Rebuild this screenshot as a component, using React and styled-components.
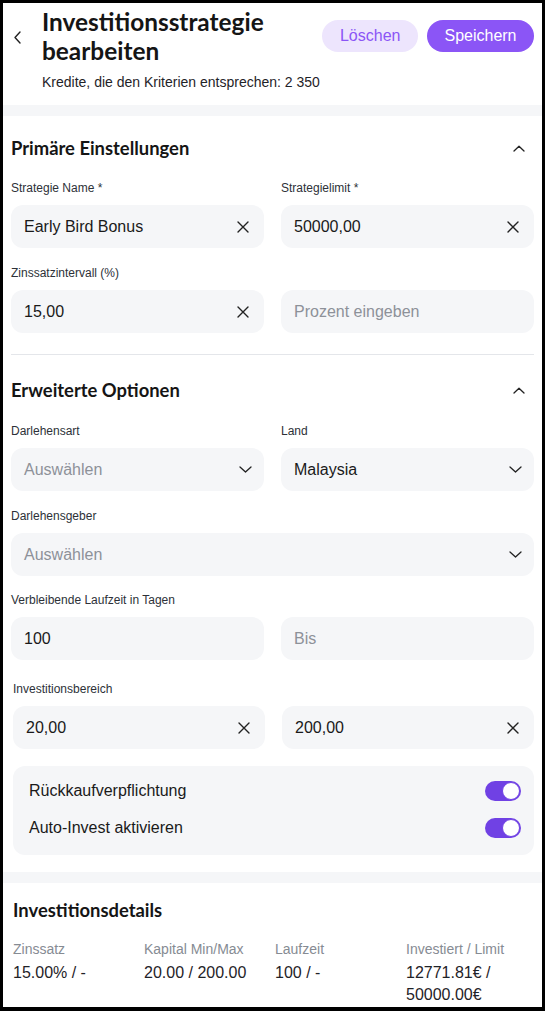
import React, { useState } from "react";
import styled, { createGlobalStyle } from "styled-components";

const GlobalStyle = createGlobalStyle`
  html, body {
    margin: 0;
    padding: 0;
    background: #ffffff;
  }
  body {
    font-family: "Liberation Sans", Arial, sans-serif;
    color: #1f2328;
  }
  * {
    box-sizing: border-box;
  }
`;

const Frame = styled.div`
  width: 545px;
  height: 1011px;
  border: 3px solid #000;
  border-bottom-width: 4px;
  overflow: hidden;
  background: #ffffff;
`;

const Header = styled.header`
  height: 102px;
  padding: 4px 8px 0 0;
`;

const HeaderRow = styled.div`
  display: flex;
  align-items: flex-start;
`;

const BackButton = styled.button`
  width: 39px;
  height: 60px;
  border: none;
  background: none;
  padding: 0 0 0 11px;
  display: flex;
  align-items: center;
  color: #222;
  cursor: pointer;
`;

const Title = styled.h1`
  flex: 1;
  margin: 0;
  font-family: Lato, "Noto Sans", sans-serif;
  font-weight: 700;
  font-size: 24.4px;
  line-height: 29px;
  color: #151515;
`;

const Actions = styled.div`
  display: flex;
  gap: 9px;
  margin-top: 13px;
`;

const PillButton = styled.button`
  height: 32px;
  padding: 0 17.5px;
  border: none;
  border-radius: 16px;
  font-family: "Liberation Sans", Arial, sans-serif;
  font-size: 16px;
  cursor: pointer;
  background: ${(p) => (p.$primary ? "#8b55f6" : "#ede5fd")};
  color: ${(p) => (p.$primary ? "#ffffff" : "#8b55f6")};
`;

const Subtitle = styled.div`
  margin: 7px 0 0 39px;
  font-size: 14px;
  line-height: 16px;
  color: #1f2328;
`;

const Band = styled.div`
  height: 11px;
  margin-top: ${(p) => p.$top || 0}px;
  background: #f5f6f8;
`;

const Card = styled.section`
  padding: 0 8px;
`;

const SectionHeader = styled.div`
  display: flex;
  align-items: center;
  justify-content: space-between;
  height: 24px;
  margin-top: ${(p) => p.$top || 20}px;
  padding-right: 9px;
`;

const SectionTitle = styled.h2`
  margin: 0;
  font-family: Lato, "Noto Sans", sans-serif;
  font-weight: 700;
  font-size: 18.4px;
  line-height: 24px;
  color: #151515;
`;

const Grid = styled.div`
  display: grid;
  grid-template-columns: ${(p) => (p.$single ? "1fr" : "1fr 1fr")};
  column-gap: 17px;
  margin-top: ${(p) => p.$top || 17}px;
  padding-left: ${(p) => p.$shift || 0}px;
`;

const Label = styled.label`
  display: block;
  grid-column: 1 / -1;
  font-size: 12px;
  line-height: 16px;
  color: #2d3138;
  margin-bottom: 9px;
`;

const Field = styled.div`
  height: 43px;
  border-radius: 12px;
  background: #f5f6f8;
  display: flex;
  align-items: center;
  justify-content: space-between;
  padding: 0 ${(p) => (p.$select ? 12 : 15)}px 0 13px;
  font-size: 16px;
  color: ${(p) => (p.$placeholder ? "#8d9199" : "#1a1a1a")};
`;

const Divider = styled.hr`
  margin: 21px 0 0;
  border: none;
  border-top: 1px solid #e4e6ea;
`;

const ToggleBox = styled.div`
  margin: 17px 0 0 2px;
  padding: 15px 13px 17px 16px;
  border-radius: 12px;
  background: #f5f6f8;
  display: flex;
  flex-direction: column;
  gap: 17px;
`;

const ToggleRow = styled.div`
  display: flex;
  align-items: center;
  justify-content: space-between;
  height: 20px;
  font-size: 16px;
  color: #1a1a1a;
`;

const Switch = styled.button`
  position: relative;
  width: 36px;
  height: 20px;
  border: none;
  border-radius: 10px;
  background: ${(p) => (p.$on ? "#7041e4" : "#d1d5db")};
  padding: 0;
  cursor: pointer;

  &::after {
    content: "";
    position: absolute;
    top: 1px;
    left: ${(p) => (p.$on ? "17px" : "1px")};
    width: 18px;
    height: 18px;
    border-radius: 50%;
    background: #fff;
    box-sizing: border-box;
    border: 1.5px solid #7041e4;
  }
`;

const DetailsCard = styled.section`
  padding: 15px 10px 0;
`;

const DetailsGrid = styled.div`
  display: grid;
  grid-template-columns: repeat(4, 131px);
  margin-top: 19px;
`;

const DetailLabel = styled.div`
  font-size: 14px;
  line-height: 16px;
  color: #868b93;
`;

const DetailValue = styled.div`
  margin-top: 5px;
  font-size: 16px;
  line-height: 22px;
  color: #1f2328;
  padding-right: 8px;
`;

const ClearIcon = () => (
  <svg width="12" height="12" viewBox="0 0 12 12" fill="none">
    <path d="M1 1L11 11M11 1L1 11" stroke="#222" strokeWidth="1.4" strokeLinecap="round" />
  </svg>
);

const ChevronDown = () => (
  <svg width="13" height="7" viewBox="0 0 13 7" fill="none">
    <path d="M1 1L6.5 6L12 1" stroke="#222" strokeWidth="1.3" strokeLinecap="round" strokeLinejoin="round" />
  </svg>
);

const ChevronUp = () => (
  <svg width="12" height="7" viewBox="0 0 12 7" fill="none">
    <path d="M1 6L6 1.2L11 6" stroke="#222" strokeWidth="1.3" strokeLinecap="round" strokeLinejoin="round" />
  </svg>
);

const ChevronLeft = () => (
  <svg width="7" height="13" viewBox="0 0 7 13" fill="none">
    <path d="M6 1L1 6.5L6 12" stroke="#222" strokeWidth="1.4" strokeLinecap="round" strokeLinejoin="round" />
  </svg>
);

function Input({ value, placeholder, clear }) {
  return (
    <Field $placeholder={!value}>
      <span>{value || placeholder}</span>
      {clear && value && <ClearIcon />}
    </Field>
  );
}

function Select({ value, placeholder }) {
  return (
    <Field $select $placeholder={!value}>
      <span>{value || placeholder}</span>
      <ChevronDown />
    </Field>
  );
}

const details = [
  { label: "Zinssatz", value: "15.00% / -" },
  { label: "Kapital Min/Max", value: "20.00 / 200.00" },
  { label: "Laufzeit", value: "100 / -" },
  { label: "Investiert / Limit", value: "12771.81€ / 50000.00€" },
];

export default function App() {
  const [buyback, setBuyback] = useState(true);
  const [autoInvest, setAutoInvest] = useState(true);

  return (
    <Frame>
      <GlobalStyle />
      <Header>
        <HeaderRow>
          <BackButton>
            <ChevronLeft />
          </BackButton>
          <Title>
            Investitionsstrategie
            <br />
            bearbeiten
          </Title>
          <Actions>
            <PillButton>Löschen</PillButton>
            <PillButton $primary>Speichern</PillButton>
          </Actions>
        </HeaderRow>
        <Subtitle>Kredite, die den Kriterien entsprechen: 2 350</Subtitle>
      </Header>
      <Band />

      <Card>
        <SectionHeader>
          <SectionTitle>Primäre Einstellungen</SectionTitle>
          <ChevronUp />
        </SectionHeader>

        <Grid $top={20}>
          <div>
            <Label>Strategie Name *</Label>
            <Input value="Early Bird Bonus" clear />
          </div>
          <div>
            <Label>Strategielimit *</Label>
            <Input value="50000,00" clear />
          </div>
        </Grid>

        <Grid>
          <Label>Zinssatzintervall (%)</Label>
          <Input value="15,00" clear />
          <Input placeholder="Prozent eingeben" />
        </Grid>

        <Divider />

        <SectionHeader $top={23}>
          <SectionTitle>Erweiterte Optionen</SectionTitle>
          <ChevronUp />
        </SectionHeader>

        <Grid $top={21}>
          <div>
            <Label>Darlehensart</Label>
            <Select placeholder="Auswählen" />
          </div>
          <div>
            <Label>Land</Label>
            <Select value="Malaysia" />
          </div>
        </Grid>

        <Grid $single>
          <Label>Darlehensgeber</Label>
          <Select placeholder="Auswählen" />
        </Grid>

        <Grid $top={16}>
          <Label>Verbleibende Laufzeit in Tagen</Label>
          <Input value="100" />
          <Input placeholder="Bis" />
        </Grid>

        <Grid $top={21} $shift={2}>
          <Label>Investitionsbereich</Label>
          <Input value="20,00" clear />
          <Input value="200,00" clear />
        </Grid>

        <ToggleBox>
          <ToggleRow>
            Rückkaufverpflichtung
            <Switch $on={buyback} onClick={() => setBuyback(!buyback)} />
          </ToggleRow>
          <ToggleRow>
            Auto-Invest aktivieren
            <Switch $on={autoInvest} onClick={() => setAutoInvest(!autoInvest)} />
          </ToggleRow>
        </ToggleBox>
      </Card>

      <Band $top={17} />

      <DetailsCard>
        <SectionTitle>Investitionsdetails</SectionTitle>
        <DetailsGrid>
          {details.map((d) => (
            <div key={d.label}>
              <DetailLabel>{d.label}</DetailLabel>
              <DetailValue>{d.value}</DetailValue>
            </div>
          ))}
        </DetailsGrid>
      </DetailsCard>
    </Frame>
  );
}
